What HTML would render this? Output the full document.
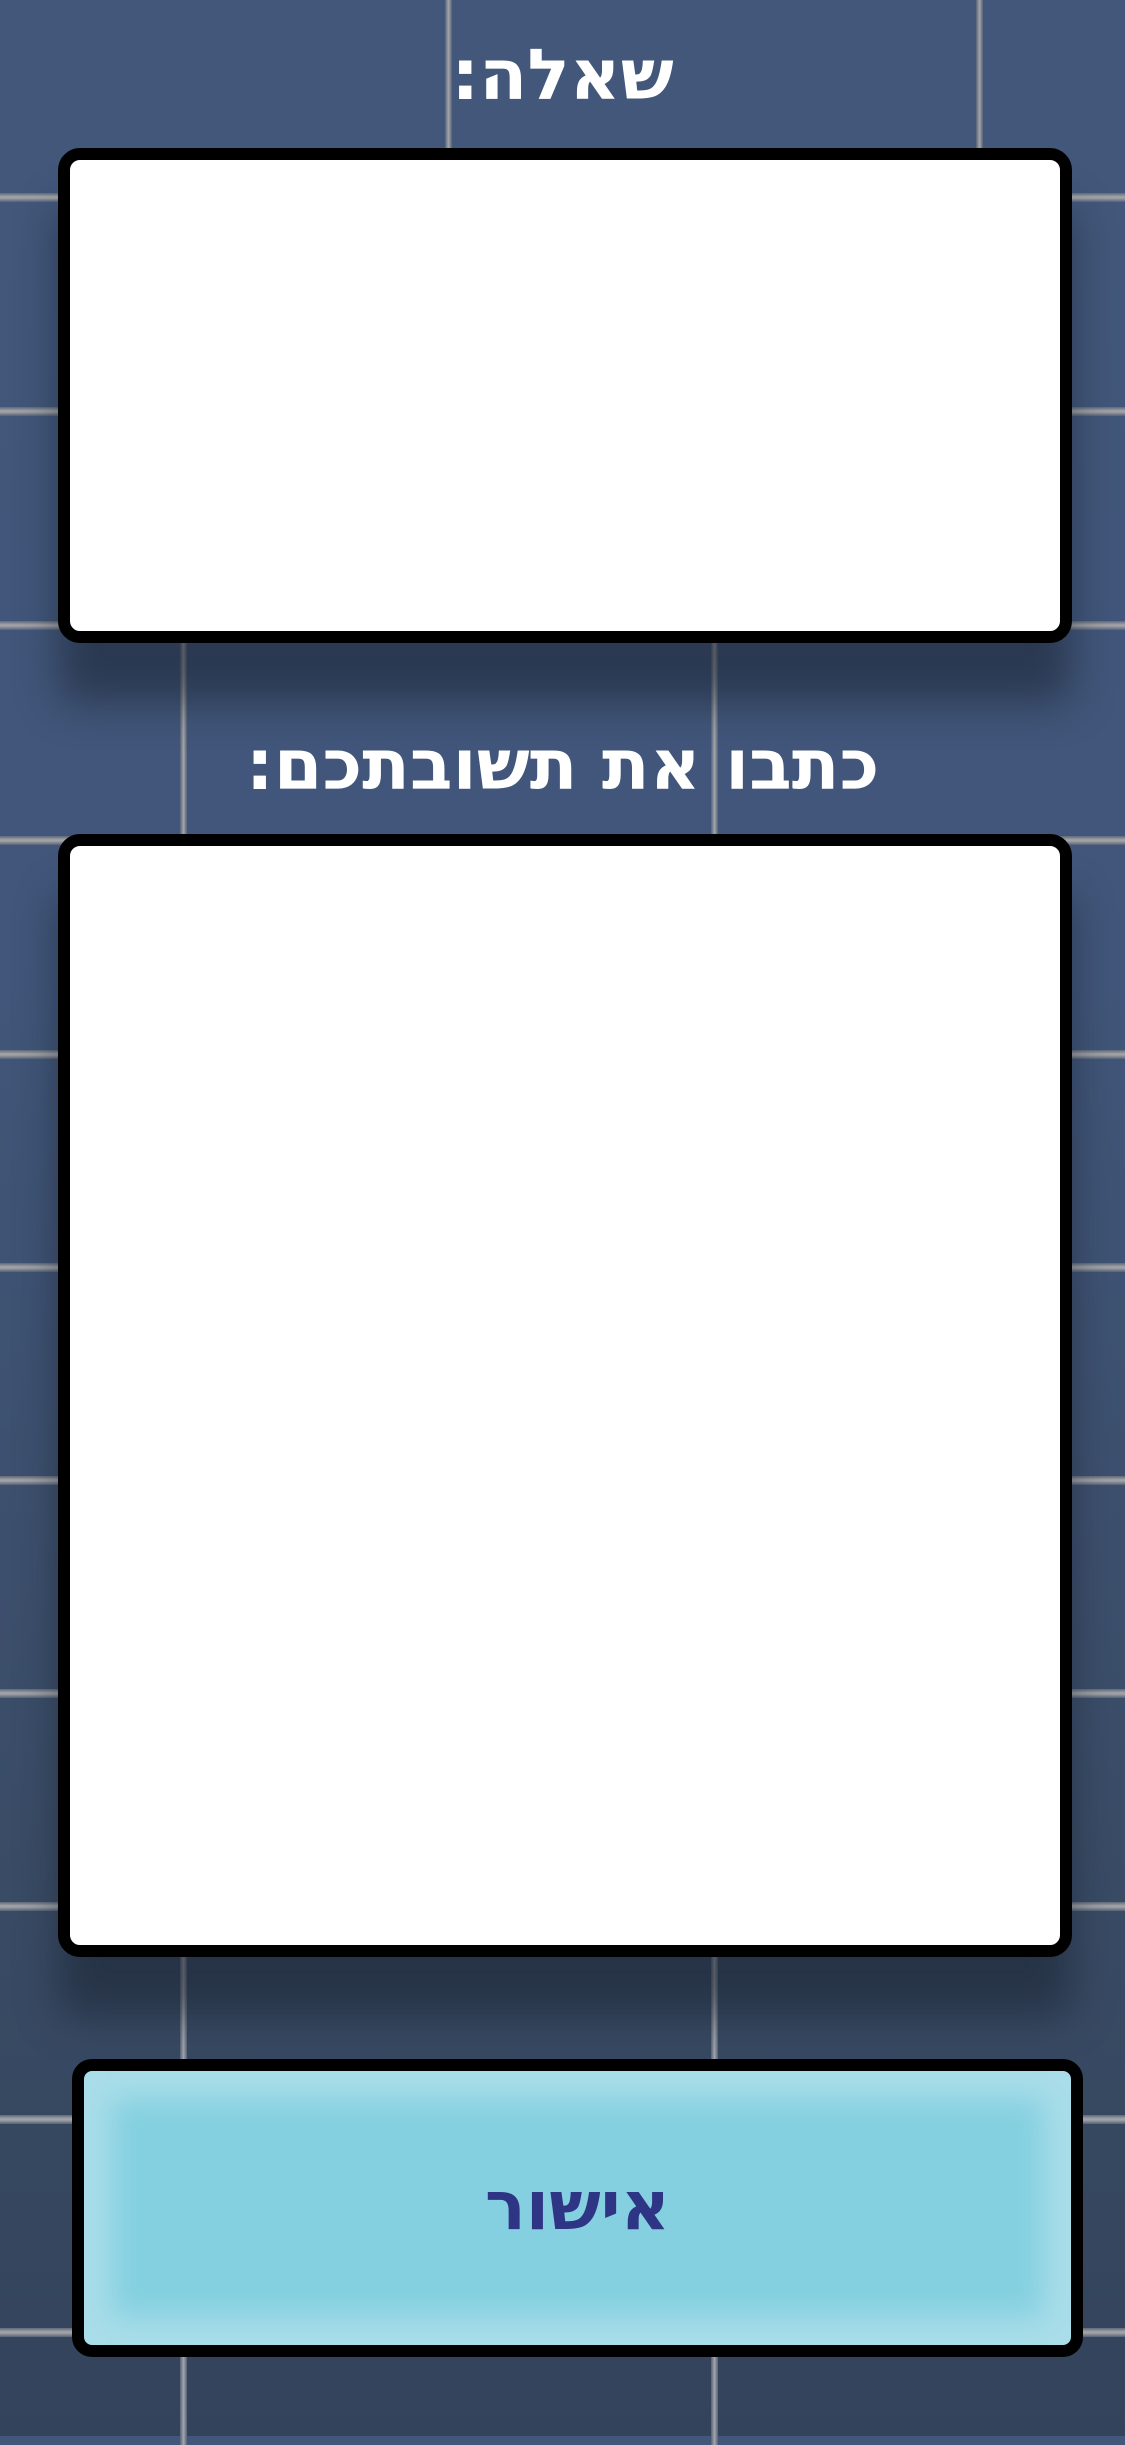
<!DOCTYPE html>
<html><head><meta charset="utf-8"><style>
html,body{margin:0;padding:0}
body{width:1125px;height:2436px;position:relative;overflow:hidden;background:#42577a;font-family:"DejaVu Sans","Liberation Sans",sans-serif}
.h{position:absolute;left:0;width:1125px;height:9px;background:linear-gradient(#5f6a7a,#a4a6aa 45%,#9a9ca2 60%,#556278)}
.v{position:absolute;width:7px;background:linear-gradient(90deg,#556278,#a4a6aa 50%,#556278)}
.shade{position:absolute;left:0;width:1125px}
.box{position:absolute;background:#fff;border:12px solid #000;border-radius:22px;box-shadow:0 60px 40px rgba(25,35,50,.55)}
.t{position:absolute;left:0;width:1125px;text-align:center;color:#fff;font-weight:bold;font-size:70px;direction:rtl;line-height:1}
.btn{position:absolute;left:72px;top:2059px;width:987px;height:274px;border:12px solid #000;border-radius:20px;background:#84d0e0;box-shadow:inset 0 0 28px 28px #a9dde9}
.btn span{position:absolute;left:0;right:0;top:102px;text-align:center;color:#2e3585;font-weight:bold;font-size:68px;direction:rtl;line-height:1}
</style></head><body>
<div class="shade" style="top:0;height:2436px;background:linear-gradient(#42577a 0%,#41567a 40%,#3a4c66 75%,#33435b 100%)"></div>
<div class="h" style="top:193px"></div>
<div class="h" style="top:407px"></div>
<div class="h" style="top:621px"></div>
<div class="h" style="top:836px"></div>
<div class="h" style="top:1050px"></div>
<div class="h" style="top:1263px"></div>
<div class="h" style="top:1476px"></div>
<div class="h" style="top:1689px"></div>
<div class="h" style="top:1902px"></div>
<div class="h" style="top:2115px"></div>
<div class="h" style="top:2328px"></div>
<div class="v" style="left:445px;top:0;height:197px"></div>
<div class="v" style="left:976px;top:0;height:197px"></div>
<div class="v" style="left:180px;top:630px;height:210px"></div>
<div class="v" style="left:711px;top:630px;height:210px"></div>
<div class="v" style="left:180px;top:1907px;height:210px"></div>
<div class="v" style="left:711px;top:1907px;height:210px"></div>
<div class="v" style="left:180px;top:2335px;height:110px"></div>
<div class="v" style="left:711px;top:2335px;height:110px"></div>

<div class="t" style="top:40px">שאלה:</div>
<div class="box" style="left:58px;top:148px;width:990px;height:471px"></div>
<div class="t" style="top:730px">כתבו את תשובתכם:</div>
<div class="box" style="left:58px;top:834px;width:990px;height:1099px"></div>
<div class="btn"><span>אישור</span></div>
</body></html>
